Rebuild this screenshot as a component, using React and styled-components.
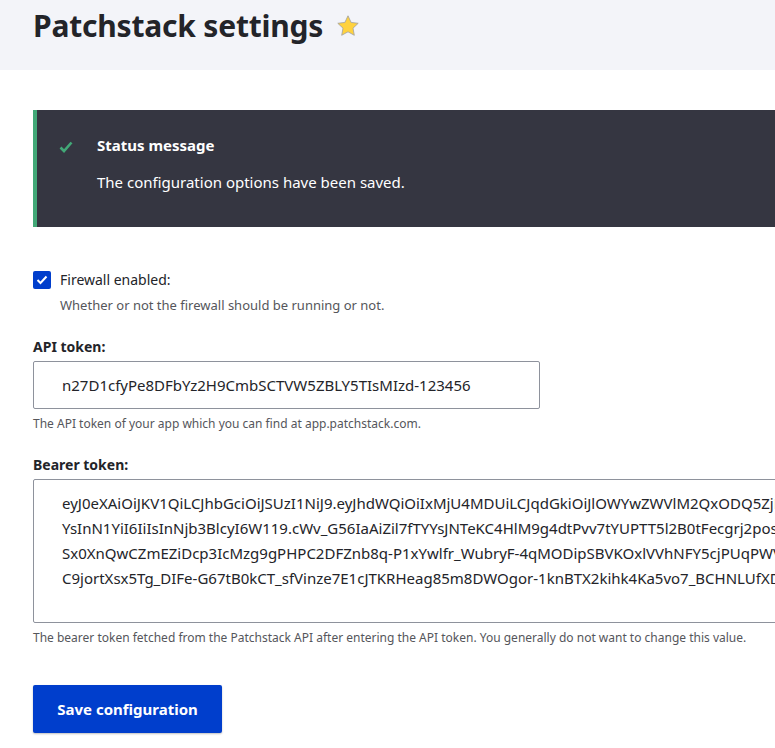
import React from 'react'
import styled, { createGlobalStyle } from 'styled-components'

const Global = createGlobalStyle`
  html, body {
    margin: 0;
    padding: 0;
    background: #ffffff;
    overflow: hidden;
  }
  body {
    font-family: "Noto Sans", "Open Sans", sans-serif;
    color: #232429;
  }
`

const Page = styled.div`
  width: 1100px;
  height: 748px;
  display: flex;
  flex-direction: column;
`

const Header = styled.header`
  background: #f3f4f9;
  height: 70px;
  padding: 0 33px;
  box-sizing: border-box;
  display: flex;
  align-items: flex-start;
`

const Title = styled.h1`
  margin: 4px 0 0;
  font-size: 30px;
  line-height: 44px;
  font-weight: 700;
  letter-spacing: -0.2px;
  display: flex;
  align-items: center;
  gap: 13px;
`

const Main = styled.main`
  padding: 40px 33px 0;
  display: flex;
  flex-direction: column;
`

const Message = styled.div`
  background: #353641;
  border-left: 4px solid #42a877;
  height: 117px;
  box-sizing: border-box;
  display: flex;
  padding: 25px 0 0 22px;
  color: #ffffff;
`

const MessageIcon = styled.div`
  width: 38px;
  padding-top: 1px;
`

const MessageBody = styled.div`
  display: flex;
  flex-direction: column;
  gap: 16px;
`

const MessageTitle = styled.div`
  font-weight: 700;
  font-size: 15px;
  line-height: 20px;
`

const MessageText = styled.div`
  font-size: 15px;
  line-height: 22px;
`

const Form = styled.form`
  display: flex;
  flex-direction: column;
  padding-top: 43px;
`

const CheckRow = styled.label`
  display: flex;
  align-items: center;
  gap: 9px;
  font-size: 14px;
  line-height: 20px;
`

const Box = styled.span`
  width: 18px;
  height: 18px;
  border-radius: 2px;
  background: #003ecc;
  display: flex;
  align-items: center;
  justify-content: center;
`

const Description = styled.div`
  font-size: ${p => p.$small ? '12px' : '13px'};
  line-height: 18px;
  color: #55565b;
  margin: ${p => p.$margin || '0'};
`

const Label = styled.label`
  font-weight: 700;
  font-size: 14px;
  line-height: 20px;
  margin: ${p => p.$margin || '0'};
`

const Input = styled.div`
  width: 507px;
  height: 48px;
  box-sizing: border-box;
  border: 1px solid #8e929c;
  border-radius: 2px;
  padding: 0 28px;
  display: flex;
  align-items: center;
  font-size: 15px;
  color: #232429;
  margin-top: 4px;
`

const TextArea = styled.div`
  width: 1000px;
  height: 144px;
  box-sizing: border-box;
  border: 1px solid #8e929c;
  border-radius: 2px;
  padding: 11px 28px;
  font-size: 15px;
  line-height: 25px;
  margin-top: 4px;
  white-space: pre;
  overflow: hidden;
`

const Button = styled.button`
  align-self: flex-start;
  margin-top: 38px;
  width: 189px;
  height: 48px;
  border: 0;
  border-radius: 2px;
  background: #003ecc;
  color: #ffffff;
  font-family: inherit;
  font-weight: 700;
  font-size: 15px;
  box-shadow: 0 1px 2px rgba(0, 0, 0, 0.25);
`

const bearer = [
  'eyJ0eXAiOiJKV1QiLCJhbGciOiJSUzI1NiJ9.eyJhdWQiOiIxMjU4MDUiLCJqdGkiOiJlOWYwZWVlM2QxODQ5ZjE2',
  'YsInN1YiI6IiIsInNjb3BlcyI6W119.cWv_G56IaAiZil7fTYYsJNTeKC4HlM9g4dtPvv7tYUPTT5l2B0tFecgrj2posfZx',
  'Sx0XnQwCZmEZiDcp3IcMzg9gPHPC2DFZnb8q-P1xYwlfr_WubryF-4qMODipSBVKOxlVVhNFY5cjPUqPWVb',
  'C9jortXsx5Tg_DIFe-G67tB0kCT_sfVinze7E1cJTKRHeag85m8DWOgor-1knBTX2kihk4Ka5vo7_BCHNLUfXDLk'
].join('\n')

export default function App() {
  return (
    <Page>
      <Global />
      <Header>
        <Title>
          Patchstack settings
          <svg width="24" height="24" viewBox="0 0 24 24">
            <path d="M12 1.8l3.1 6.6 7.1.9-5.2 4.9 1.3 7.1L12 17.8l-6.3 3.5L7 14.2 1.8 9.3l7.1-.9z" fill="#ffd23f" stroke="#a0a0a0" strokeWidth="0.8" />
          </svg>
        </Title>
      </Header>
      <Main>
        <Message>
          <MessageIcon>
            <svg width="14" height="12" viewBox="0 0 14 12">
              <path d="M1.5 6.5l3.5 3.5 7.5-8.5" fill="none" stroke="#42a877" strokeWidth="2.6" />
            </svg>
          </MessageIcon>
          <MessageBody>
            <MessageTitle>Status message</MessageTitle>
            <MessageText>The configuration options have been saved.</MessageText>
          </MessageBody>
        </Message>
        <Form>
          <CheckRow>
            <Box>
              <svg width="12" height="10" viewBox="0 0 12 10">
                <path d="M1.5 5l3 3 6-6.5" fill="none" stroke="#fff" strokeWidth="2" />
              </svg>
            </Box>
            Firewall enabled:
          </CheckRow>
          <Description $margin="6px 0 0 27px">Whether or not the firewall should be running or not.</Description>
          <Label $margin="23px 0 0">API token:</Label>
          <Input>n27D1cfyPe8DFbYz2H9CmbSCTVW5ZBLY5TIsMIzd-123456</Input>
          <Description $small $margin="6px 0 0">The API token of your app which you can find at app.patchstack.com.</Description>
          <Label $margin="22px 0 0">Bearer token:</Label>
          <TextArea>{bearer}</TextArea>
          <Description $small $margin="6px 0 0">The bearer token fetched from the Patchstack API after entering the API token. You generally do not want to change this value.</Description>
          <Button type="button">Save configuration</Button>
        </Form>
      </Main>
    </Page>
  )
}
